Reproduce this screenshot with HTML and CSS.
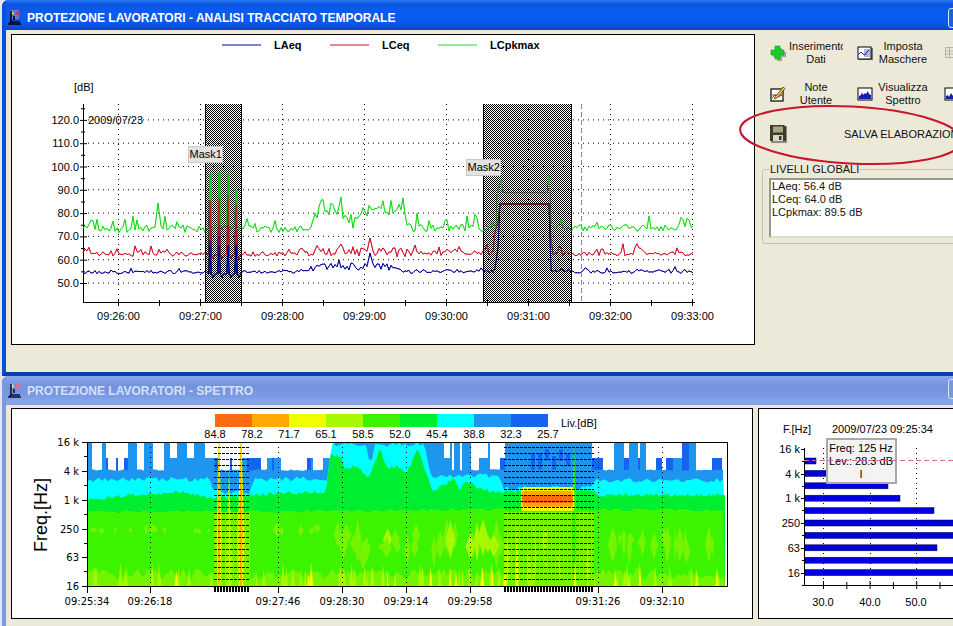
FILE: index.html
```html
<!DOCTYPE html>
<html>
  <head>
    <meta charset="UTF-8" />
    <title>Protezione Lavoratori</title>
    <link rel="stylesheet" href="styles.css">
  </head>
  <body>
    <div class="window active">
      <div class="titlebar">
        <svg class="app-icon" viewBox="0 0 14 15">
          <rect x="2" y="0" width="9" height="9" fill="#6a78c8" />
          <circle cx="10" cy="3" r="2" fill="#d03060" />
          <circle cx="4" cy="3" r="1.6" fill="#e8e060" />
          <path d="M3 1v11h9M3 12l-2 2h12M6 6v4" fill="none" stroke="#000" stroke-width="1.6" />
        </svg>
        <span class="title">PROTEZIONE LAVORATORI - ANALISI TRACCIATO TEMPORALE</span>
        <span class="close-btn"></span>
      </div>
      <div class="window-body">
        <div class="panel trace-panel">
          <svg id="trace" viewBox="12 35 742 309"></svg>
        </div>
        <div class="sidebar">
          <div class="tool-row">
            <div class="tool">
              <svg class="icon" viewBox="0 0 16 16">
                <path d="M6 2h5v4h4v5h-4v4H6v-4H2V6h4z" fill="#606058" transform="translate(1 1)" opacity="0.5" />
                <path d="M5 1h5v4h4v5h-4v4H5v-4H1V5h4z" fill="#14d020" stroke="#0aa018" stroke-width="0.6" />
              </svg>
              <div class="tool-label">Inserimento<br>Dati</div>
            </div>
            <div class="tool">
              <svg class="icon" viewBox="0 0 16 16">
                <rect x="2" y="3" width="14" height="12" fill="#77776a" />
                <rect x="1" y="2" width="13" height="12" fill="#fff" stroke="#000" />
                <rect x="7" y="4" width="6" height="8" fill="#b4b8e0" />
                <path d="M2 9l2-2 2 2 2 1 2-3 2-2" fill="none" stroke="#1020a0" />
              </svg>
              <div class="tool-label">Imposta<br>Maschere</div>
            </div>
            <div class="tool">
              <svg class="icon" viewBox="0 0 16 16">
                <path d="M1.500 2.500h13v10h-13zM1.500 6h13M1.500 9h13M5.500 2.500v10M9.500 2.500v10" fill="none" stroke="#b4b2a4" />
              </svg>
            </div>
          </div>
          <div class="tool-row">
            <div class="tool">
              <svg class="icon" viewBox="0 0 16 16">
                <rect x="1" y="3" width="12" height="12" fill="#fff" stroke="#000" stroke-width="1.200" />
                <path d="M2 12l3-3 3 2 4-2M2 9h10" fill="none" stroke="#d02030" />
                <path d="M5 11l8-10 2 1.500-8 9.500-3 1z" fill="#e8d020" stroke="#303030" stroke-width="0.7" />
              </svg>
              <div class="tool-label">Note<br>Utente</div>
            </div>
            <div class="tool">
              <svg class="icon" viewBox="0 0 16 16">
                <rect x="1" y="2" width="14" height="12" fill="#fff" stroke="#000" />
                <path d="M2 13V10l2-1 1-3 1 3 2-2 1 1 2-3 1 3 2 1v4z" fill="#1020b0" />
              </svg>
              <div class="tool-label">Visualizza<br>Spettro</div>
            </div>
            <div class="tool">
              <svg class="icon" viewBox="0 0 16 16">
                <rect x="1" y="2" width="14" height="12" fill="#fff" stroke="#000" />
                <path d="M2 13V10l2-1 1 2 2-4 2 3 2-2 3 1v4z" fill="#1020b0" />
              </svg>
            </div>
          </div>
          <div class="save-row">
            <svg class="icon save-icon" viewBox="0 0 17 18">
              <rect x="1" y="1" width="16" height="17" fill="#8c8c80" />
              <path d="M0 0h14l2 2v14H0z" fill="#3c3c28" />
              <rect x="3" y="1.500" width="10" height="6" fill="#a8a880" />
              <rect x="3" y="10" width="10" height="6" fill="#d8d8c8" />
              <rect x="9" y="11" width="2.500" height="4" fill="#3c3c28" />
            </svg>
            <span class="save-label">SALVA ELABORAZIONE</span>
          </div>
          <fieldset class="group">
            <legend>LIVELLI GLOBALI</legend>
            <div class="levels">
              <div>LAeq: 56.4 dB</div>
              <div>LCeq: 64.0 dB</div>
              <div>LCpkmax: 89.5 dB</div>
            </div>
          </fieldset>
        </div>
      </div>
      <svg class="callout" viewBox="730 100 240 70">
        <ellipse cx="849" cy="135" rx="111" ry="28.500" transform="rotate(3 849 135)" />
      </svg>
    </div>

    <div class="window inactive">
      <div class="titlebar">
        <svg class="app-icon" viewBox="0 0 14 15">
          <circle cx="10" cy="3" r="2.500" fill="#d87098" />
          <circle cx="4" cy="3" r="1.800" fill="#f0e880" />
          <path d="M3 1v11h9M3 12l-2 2h12M6 6v4" fill="none" stroke="#101030" stroke-width="1.600" />
        </svg>
        <span class="title">PROTEZIONE LAVORATORI - SPETTRO</span>
        <span class="close-btn"></span>
      </div>
      <div class="window-body spectrum-body">
        <div class="panel spectrum-panel">
          <svg id="spectrum" viewBox="12 409 740 209"></svg>
        </div>
        <div class="panel bars-panel">
          <svg id="bars" viewBox="759 409 200 209"></svg>
        </div>
      </div>
    </div>

    <script src="charts.js"></script>
  </body>
</html>
```

FILE: styles.css
```css
body {
  margin: 0;
  width: 953px;
  height: 626px;
  overflow: hidden;
  background: #e4e6ee;
  font-family: "Liberation Sans", Arial, sans-serif;
  font-size: 11px;
  color: #111;
}
.window {
  position: relative;
  width: 970px;
  margin-left: 2px;
  background: #ece9d8;
  border-left: 4px solid #0a4fd8;
  box-sizing: border-box;
}
.window.active {
  height: 376px;
  border-bottom: 4px solid #0a3cb8;
  border-top-left-radius: 6px;
}
.window.inactive {
  height: 250px;
  border-left-color: #7d97e0;
  border-top-left-radius: 6px;
}
.titlebar {
  display: flex;
  align-items: center;
  padding-left: 2px;
  box-sizing: border-box;
}
.active .titlebar {
  height: 30px;
  padding-top: 5px;
  background: linear-gradient(#2a7af0 0, #0a56e4 4px, #0a5cf0 16px, #0a58e8 24px, #0646c4 100%);
  color: #fff;
}
.inactive .titlebar {
  height: 29px;
  background: linear-gradient(#8aa8ea 0, #7392dc 10px, #7a9ae2 20px, #86a8ec 26px, #8c9cd8 100%);
  color: #d4e0f8;
}
.app-icon {
  width: 14px;
  height: 15px;
  margin-right: 5px;
}
.title {
  font-size: 12px;
  font-weight: bold;
  white-space: nowrap;
}
.close-btn {
  position: absolute;
  left: 942px;
  top: 8px;
  width: 20px;
  height: 18px;
  border: 1px solid #d8e4fc;
  border-radius: 3px;
  background: #1a62e0;
}
.inactive .close-btn {
  top: 3px;
  background: #7a96e0;
}
.window-body {
  display: flex;
  height: 341px;
  padding-left: 5px;
}
.panel {
  flex: none;
  border: 1px solid #000;
  background: #fff;
  box-sizing: border-box;
}
.panel svg {
  display: block;
  font-family: "Liberation Sans", Arial, sans-serif;
  font-size: 11px;
}
.trace-panel {
  width: 744px;
  height: 311px;
  margin-top: 4px;
}
#trace {
  width: 742px;
  height: 309px;
}
.sidebar {
  flex: 1;
  padding-top: 10px;
  overflow: hidden;
}
.tool-row {
  display: flex;
  height: 26px;
  margin: 0 0 15px 11px;
}
.tool {
  flex: none;
  display: flex;
  align-items: center;
  width: 87px;
  padding-left: 4px;
  box-sizing: border-box;
}
.icon {
  flex: none;
  width: 16px;
  height: 16px;
}
.tool-label {
  width: 54px;
  margin-left: 3px;
  overflow: hidden;
  white-space: nowrap;
  text-align: center;
  line-height: 13px;
}
.save-row {
  display: flex;
  align-items: center;
  height: 27px;
  margin-top: -2px;
  padding-left: 15px;
}
.save-icon {
  width: 17px;
  height: 18px;
}
.save-label {
  margin-left: 57px;
  white-space: nowrap;
}
.group {
  margin: 16px 0 0 7px;
  padding: 3px 6px 5px;
  border: 1px solid #c4c2b2;
  border-radius: 3px;
}
.group legend {
  padding: 0 1px;
  margin-left: 0;
  line-height: 12px;
}
.levels {
  height: 60px;
  padding: 0 1px;
  box-sizing: border-box;
  background: #fff;
  border: 2px solid #9a988c;
  border-right-color: #ece9d8;
  border-bottom-color: #dedbc8;
  line-height: 13px;
}
.callout {
  position: absolute;
  left: 726px;
  top: 100px;
  width: 240px;
  height: 70px;
  overflow: visible;
}
.callout ellipse {
  fill: none;
  stroke: #c8142c;
  stroke-width: 2;
}
.spectrum-body {
  height: 221px;
  padding-top: 3px;
  gap: 5px;
}
.spectrum-panel {
  width: 742px;
  height: 211px;
}
#spectrum {
  width: 740px;
  height: 209px;
}
.bars-panel {
  width: 202px;
  height: 211px;
}
#bars {
  width: 200px;
  height: 209px;
}
.axis {
  stroke: #000;
  stroke-width: 1;
  fill: none;
}
.grid {
  stroke: #000;
  stroke-width: 1;
  stroke-dasharray: 1 4;
  fill: none;
}
.cursor {
  stroke: #d8609c;
  stroke-width: 1;
  stroke-dasharray: 5 3;
}
.series {
  fill: none;
  stroke-width: 1;
}
.series-over {
  fill: none;
  stroke-width: 1;
  stroke-dasharray: 1 1;
}
.legend-name {
  font-weight: bold;
}
.end {
  text-anchor: end;
}
.mid {
  text-anchor: middle;
}
.wide {
  font-family: "DejaVu Sans", sans-serif;
  font-size: 10px;
}
.axis-title {
  font-size: 18px;
}
.mask-label {
  fill: #e2e2e2;
  stroke: #c8c8c8;
}
.mask-dash {
  stroke: #000;
  stroke-dasharray: 3 1;
}
.mask-tick {
  stroke: #000;
  stroke-width: 6;
  stroke-dasharray: 2 1;
}
.tooltip {
  fill: #f2f2f2;
  fill-opacity: 0.92;
  stroke: #a8a8a8;
  stroke-width: 2;
}
```

FILE: charts.js
```js
const NS = "http://www.w3.org/2000/svg";

function el(parent, tag, attrs, text) {
  const node = document.createElementNS(NS, tag);
  for (const key in attrs) node.setAttribute(key, attrs[key]);
  if (text !== undefined) node.textContent = text;
  parent.appendChild(node);
  return node;
}

function label(parent, x, y, text, cls) {
  return el(parent, "text", { x: x, y: y, class: cls || "" }, text);
}

function line(parent, x1, y1, x2, y2, cls) {
  return el(parent, "line", { x1: x1, y1: y1, x2: x2, y2: y2, class: cls || "axis" });
}

// small seeded generator so the noise is the same on every load
let seed = 20090723;
function rnd() {
  seed = (seed * 1664525 + 1013904223) % 4294967296;
  return seed / 4294967296;
}
function noise(amp) {
  return (rnd() * 2 - 1) * amp;
}

function env(points, x) {
  if (x <= points[0][0]) return points[0][1];
  for (let i = 1; i < points.length; i++) {
    if (x <= points[i][0]) {
      const a = points[i - 1];
      const b = points[i];
      return a[1] + ((b[1] - a[1]) * (x - a[0])) / (b[0] - a[0]);
    }
  }
  return points[points.length - 1][1];
}

function toPoints(list) {
  return list.map((p) => p[0].toFixed(1) + "," + p[1].toFixed(1)).join(" ");
}

/* ---------- time trace ---------- */

function makeSeries(base, amp, spikeAmp, fixed) {
  const pts = [];
  for (let x = 83; x <= 694; x += 2) {
    const inFixed = fixed.some((f) => x >= f.from && x <= f.to);
    if (inFixed) continue;
    const busy = x > 312 && x < 414 ? 2 : 1;
    let y = env(base, x) + noise(amp * busy);
    if (rnd() < 0.14) y -= spikeAmp * (0.4 + rnd() * 0.6);
    pts.push([x, y]);
  }
  fixed.forEach((f) => f.pts.forEach((p) => pts.push(p)));
  pts.sort((a, b) => a[0] - b[0]);
  return pts;
}

function pulses(low, high, tops) {
  const pts = [];
  tops.forEach((x, i) => {
    pts.push([x - 1.5, low], [x, high[i]], [x + 1.5, low]);
    pts.push([x + 3, low + 4], [x + 4.5, low]);
  });
  return pts;
}

function drawTrace() {
  const svg = document.getElementById("trace");
  const defs = el(svg, "defs", {});
  const hatch = el(defs, "pattern", { id: "hatch", width: 2, height: 2, patternUnits: "userSpaceOnUse" });
  el(hatch, "rect", { x: 0, y: 0, width: 1, height: 1, fill: "#000", "shape-rendering": "crispEdges" });
  el(hatch, "rect", { x: 1, y: 1, width: 1, height: 1, fill: "#000", "shape-rendering": "crispEdges" });

  const names = [
    ["LAeq", 222, 274, "#0000a0"],
    ["LCeq", 330, 382, "#d0102a"],
    ["LCpkmax", 438, 490, "#18dc18"],
  ];
  names.forEach((n) => {
    el(svg, "line", { x1: n[1], y1: 45, x2: n[1] + 39, y2: 45, stroke: n[3] });
    label(svg, n[2], 49, n[0], "legend-name");
  });
  label(svg, 74, 91, "[dB]");
  label(svg, 88, 124, "2009/07/23");

  const dbY = (db) => 283 - (db - 50) * 2.33;
  for (let db = 50; db <= 120; db += 10) {
    const y = dbY(db);
    line(svg, 83, y, 695, y, "grid");
    line(svg, 80, y + 0.5, 87, y + 0.5);
    line(svg, 81, dbY(db + 5) + 0.5, 85, dbY(db + 5) + 0.5);
    label(svg, 79, y + 4, db.toFixed(1), "end");
  }
  line(svg, 83.5, 104, 83.5, 302);
  line(svg, 83, 302.5, 695, 302.5);

  const times = ["09:26:00", "09:27:00", "09:28:00", "09:29:00", "09:30:00", "09:31:00", "09:32:00", "09:33:00"];
  times.forEach((t, i) => {
    const x = 118.5 + i * 82;
    line(svg, x, 104, x, 302, "grid");
    line(svg, x, 300, x, 306);
    if (i < 7) line(svg, x + 41, 300, x + 41, 306);
    label(svg, x, 320, t, "mid");
  });

  const green = makeSeries(
    [[83, 229], [310, 229], [317, 214], [337, 210], [353, 222], [360, 211], [387, 211], [398, 208], [413, 228], [483, 228], [695, 228]],
    3.5, 13,
    [
      { from: 157, to: 159, pts: [[158, 203]] },
      { from: 206, to: 241, pts: pulses(226, [173, 172, 173, 190], [210, 219, 228, 236]) },
      { from: 496, to: 552, pts: [[496, 228], [497, 195], [501, 180], [503, 193], [547, 193], [549, 175], [551, 222]] },
    ]
  );
  const blue = makeSeries(
    [[83, 272], [310, 272], [320, 266], [360, 267], [380, 266], [413, 271], [695, 272]],
    1.6, 4,
    [
      { from: 369, to: 371, pts: [[370, 253]] },
      { from: 206, to: 241, pts: pulses(274, [240, 236, 245, 244], [210, 219, 228, 236]) },
      { from: 494, to: 552, pts: [[495, 268], [498, 248], [500, 204], [549, 204], [551, 270]] },
    ]
  );
  const red = makeSeries(
    [[83, 254], [310, 254], [330, 251], [413, 253], [695, 254]],
    2.4, 8,
    [
      { from: 369, to: 371, pts: [[370, 238]] },
      { from: 206, to: 241, pts: pulses(255, [200, 198, 195, 205], [210, 219, 228, 236]) },
      { from: 494, to: 552, pts: [[495, 232], [498, 222], [500, 204], [549, 204], [551, 240]] },
    ]
  );
  const lines = [[green, "#10dc18"], [blue, "#0000a0"], [red, "#d0102a"]];
  lines.forEach((s) => el(svg, "polyline", { points: toPoints(s[0]), stroke: s[1], class: "series" }));

  [[205, 241, "Mask1", 188, 146], [483, 571, "Mask2", 466, 159]].forEach((m) => {
    el(svg, "rect", { x: m[0], y: 104, width: m[1] - m[0], height: 198, fill: "url(#hatch)" });
    line(svg, m[0] + 0.5, 104, m[0] + 0.5, 302);
    line(svg, m[1] + 0.5, 104, m[1] + 0.5, 302);
  });

  // the traces still show through the hatch of the masks
  [209, 218, 227, 235].forEach((x, i) => {
    const top = [173, 172, 173, 190][i];
    el(svg, "rect", { x: x, y: top, width: 3, height: 226 - top, fill: "#10dc18", "fill-opacity": 0.6 });
    el(svg, "rect", { x: x, y: 200, width: 2, height: 46, fill: "#d0102a", "fill-opacity": 0.7 });
    el(svg, "rect", { x: x, y: 246, width: 2, height: 28, fill: "#0000c0", "fill-opacity": 0.8 });
  });
  lines.forEach((s) => el(svg, "polyline", { points: toPoints(s[0]), stroke: s[1], class: "series-over" }));

  [["Mask1", 188, 146], ["Mask2", 466, 159]].forEach((m) => {
    el(svg, "rect", { x: m[1] + 0.5, y: m[2] + 0.5, width: 34, height: 16, class: "mask-label" });
    label(svg, m[1] + 1.5, m[2] + 12, m[0]);
  });
  line(svg, 581.5, 104, 581.5, 302, "cursor");
}

/* ---------- spectrogram ---------- */

function band(svg, top, amp, fill, step) {
  const pts = [];
  for (let x = 87; x <= 725; x += step) pts.push([x, env(top, x) + noise(amp)]);
  pts.push([725, 586], [87, 586]);
  el(svg, "polygon", { points: toPoints(pts), fill: fill });
}

function lens(svg, x, w, y1, y2, fill) {
  const mid = (y1 + y2) / 2;
  const pts = [[x, y1], [x + w / 2, mid], [x, y2], [x - w / 2, mid]];
  el(svg, "polygon", { points: toPoints(pts), fill: fill });
}

function drawSpectrum() {
  const svg = document.getElementById("spectrum");
  const C = {
    orange: "#ff6a10",
    amber: "#ffaa00",
    yellow: "#f0ff00",
    lime: "#a8f800",
    soft: "#74f400",
    leaf: "#3cf400",
    green: "#00ee30",
    cyan: "#00ffff",
    sky: "#1e96f0",
    blue: "#1464f0",
  };

  // colour scale
  const scale = [C.orange, C.amber, C.yellow, C.lime, C.leaf, C.green, C.cyan, C.sky, C.blue];
  scale.forEach((c, i) => {
    el(svg, "rect", { x: 215 + i * 37, y: 414, width: 37, height: 13, fill: c });
  });
  ["84.8", "78.2", "71.7", "65.1", "58.5", "52.0", "45.4", "38.8", "32.3", "25.7"].forEach((t, i) => {
    label(svg, 215 + i * 37, 438, t, "mid");
  });
  label(svg, 561, 427, "Liv.[dB]");

  const defs = el(svg, "defs", {});
  const clip = el(defs, "clipPath", { id: "plot" });
  el(clip, "rect", { x: 87, y: 442, width: 640, height: 144 });
  const plot = el(svg, "g", { "clip-path": "url(#plot)" });

  // top: white with blue columns
  for (let x = 87; x < 725; ) {
    const w = 2 + Math.floor(rnd() * 10);
    const r = rnd();
    const busy = (x > 328 && x < 428) || (x > 500 && x < 584);
    if (busy) {
      el(plot, "rect", { x: x, y: 442, width: w, height: 30, fill: C.sky });
    } else if (r < 0.25) {
      el(plot, "rect", { x: x, y: 442, width: w, height: 30, fill: r < 0.08 ? C.blue : C.sky });
    } else if (r < 0.6) {
      el(plot, "rect", { x: x, y: 458, width: w, height: 14, fill: r < 0.45 ? C.blue : C.sky });
    }
    x += w;
  }
  for (let x = 531; x < 570; x += 7) {
    if (rnd() < 0.75) {
      el(plot, "rect", { x: x, y: 447 + rnd() * 10, width: 4, height: 10 + rnd() * 10, fill: C.blue });
    }
  }

  band(plot, [[87, 470], [725, 470]], 0.8, C.sky, 3);
  band(
    plot,
    [[87, 480], [210, 479], [214, 492], [250, 492], [254, 480], [328, 478], [331, 444], [366, 444], [368, 460], [373, 460], [375, 444], [425, 444], [430, 476], [500, 476], [504, 488], [590, 488], [596, 480], [725, 480]],
    2.5, C.cyan, 3
  );
  band(
    plot,
    [[87, 500], [130, 495], [180, 492], [212, 498], [250, 495], [290, 493], [326, 492], [330, 456], [341, 456], [345, 469], [357, 466], [368, 479], [380, 449], [388, 469], [397, 466], [407, 473], [418, 449], [428, 479], [433, 491], [453, 479], [460, 490], [467, 480], [480, 490], [503, 492], [590, 490], [600, 495], [725, 495]],
    2, C.green, 2
  );
  band(plot, [[87, 512], [330, 511], [500, 509], [725, 510]], 1.5, C.leaf, 4);

  // lighter patches in the body and near the floor
  for (let i = 0; i < 30; i++) {
    const x = 330 + rnd() * 170;
    lens(plot, x, 5 + rnd() * 7, 518 + rnd() * 25, 545 + rnd() * 25, i % 4 ? C.soft : C.lime);
  }
  for (let i = 0; i < 20; i++) {
    const x = 87 + rnd() * 240;
    lens(plot, x, 3 + rnd() * 6, 523 + rnd() * 6, 532 + rnd() * 6, C.soft);
  }
  for (let i = 0; i < 24; i++) {
    const x = 594 + rnd() * 130;
    lens(plot, x, 3 + rnd() * 6, 525 + rnd() * 15, 545 + rnd() * 20, C.soft);
  }
  const floor = [];
  for (let x = 87; x <= 725; x += 3) floor.push([x, 574 + noise(6)]);
  floor.push([725, 586], [87, 586]);
  el(plot, "polygon", { points: toPoints(floor), fill: C.soft });
  for (let i = 0; i < 90; i++) {
    const x = 88 + rnd() * 636;
    lens(plot, x, 2 + rnd() * 3, 562 + rnd() * 12, 610, rnd() < 0.2 ? C.yellow : C.lime);
  }

  // Mask1 streaks
  el(plot, "rect", { x: 214, y: 512, width: 36, height: 74, fill: C.soft });
  lens(plot, 229, 7, 470, 660, C.lime);
  [[219, 5], [241, 7]].forEach((s) => {
    lens(plot, s[0], s[1], 420, 660, "#dcfa00");
    lens(plot, s[0], s[1] * 0.45, 430, 640, C.amber);
  });

  // Mask2 body
  el(plot, "rect", { x: 504, y: 512, width: 90, height: 74, fill: C.soft });
  for (let i = 0; i < 20; i++) {
    lens(plot, 504 + rnd() * 88, 4 + rnd() * 7, 515 + rnd() * 30, 570 + rnd() * 30, i % 3 ? C.soft : C.lime);
  }
  lens(plot, 517, 3, 520, 640, C.yellow);
  lens(plot, 574, 5, 442, 620, C.leaf);
  lens(plot, 505, 5, 570, 610, C.yellow);
  lens(plot, 575, 3, 560, 610, C.yellow);
  el(plot, "rect", { x: 521, y: 487, width: 53, height: 24, rx: 3, fill: C.yellow });
  el(plot, "rect", { x: 522, y: 491, width: 51, height: 16, rx: 2, fill: C.amber });
  el(plot, "rect", { x: 522, y: 495, width: 51, height: 8, fill: C.orange });

  // frame, ticks, labels
  el(svg, "rect", { x: 87.5, y: 442.5, width: 640, height: 144, class: "axis" });
  [150, 278, 342, 406, 470, 598, 662].forEach((x) => line(svg, x + 0.5, 442, x + 0.5, 586, "grid"));

  [[214, 250], [504, 594]].forEach((m) => {
    for (let y = 447.5; y < 585; y += 6) line(svg, m[0], y, m[1], y, "mask-dash");
    line(svg, m[0], 589, m[1], 589, "mask-tick");
  });

  const ticks = { 87: "09:25:34", 150: "09:26:18", 278: "09:27:46", 342: "09:28:30", 406: "09:29:14", 470: "09:29:58", 598: "09:31:26", 662: "09:32:10" };
  Object.keys(ticks).forEach((x) => {
    line(svg, +x + 0.5, 586, +x + 0.5, 593);
    label(svg, +x, 605, ticks[x], "mid wide");
  });

  [[442, "16 k"], [471, "4 k"], [500, "1 k"], [529, "250"], [557, "63"], [586, "16"]].forEach((t) => {
    line(svg, 82, t[0] + 0.5, 87, t[0] + 0.5);
    if (t[0] < 586) line(svg, 84, t[0] + 14.5, 87, t[0] + 14.5);
    label(svg, 79, t[0] + 4, t[1], "end wide");
  });
  el(svg, "text", { transform: "translate(47 552) rotate(-90)", class: "axis-title" }, "Freq.[Hz]");
}

/* ---------- level bars ---------- */

function drawBars() {
  const svg = document.getElementById("bars");
  label(svg, 783, 433, "F.[Hz]");
  label(svg, 832, 433, "2009/07/23 09:25:34");

  const ends = [816, 826, 888, 900, 934, 965, 965, 937, 965, 965];
  ends.forEach((end, i) => {
    el(svg, "rect", { x: 805, y: 458 + i * 12.4, width: end - 805, height: 6, fill: "#0000e0", stroke: "#000040", "stroke-width": 0.5 });
  });

  [823, 870, 916].forEach((x, i) => {
    line(svg, x + 0.5, 448, x + 0.5, 585, "grid");
    label(svg, x, 606, ["30.0", "40.0", "50.0"][i], "mid");
  });
  line(svg, 804.5, 448, 804.5, 585);
  line(svg, 804, 585.5, 960, 585.5);
  for (let i = 0; i < 7; i++) {
    const x = 823.5 + i * 23.3;
    line(svg, x, i % 2 ? 582 : 581, x, 589);
  }

  [[449, "16 k"], [474, "4 k"], [498, "1 k"], [523, "250"], [548, "63"], [573, "16"]].forEach((t) => {
    line(svg, 801, t[0] + 0.5, 805, t[0] + 0.5);
    line(svg, 802, t[0] + 12.5, 805, t[0] + 12.5);
    label(svg, 800, t[0] + 4, t[1], "end");
  });

  el(svg, "rect", { x: 827, y: 439, width: 69, height: 44, class: "tooltip" });
  label(svg, 861, 452, "Freq: 125 Hz", "mid");
  label(svg, 861, 465, "Lev.: 28.3 dB", "mid");
  label(svg, 861, 478, "I", "mid");
  line(svg, 804, 460.5, 960, 460.5, "cursor");
}

drawTrace();
drawSpectrum();
drawBars();
```
